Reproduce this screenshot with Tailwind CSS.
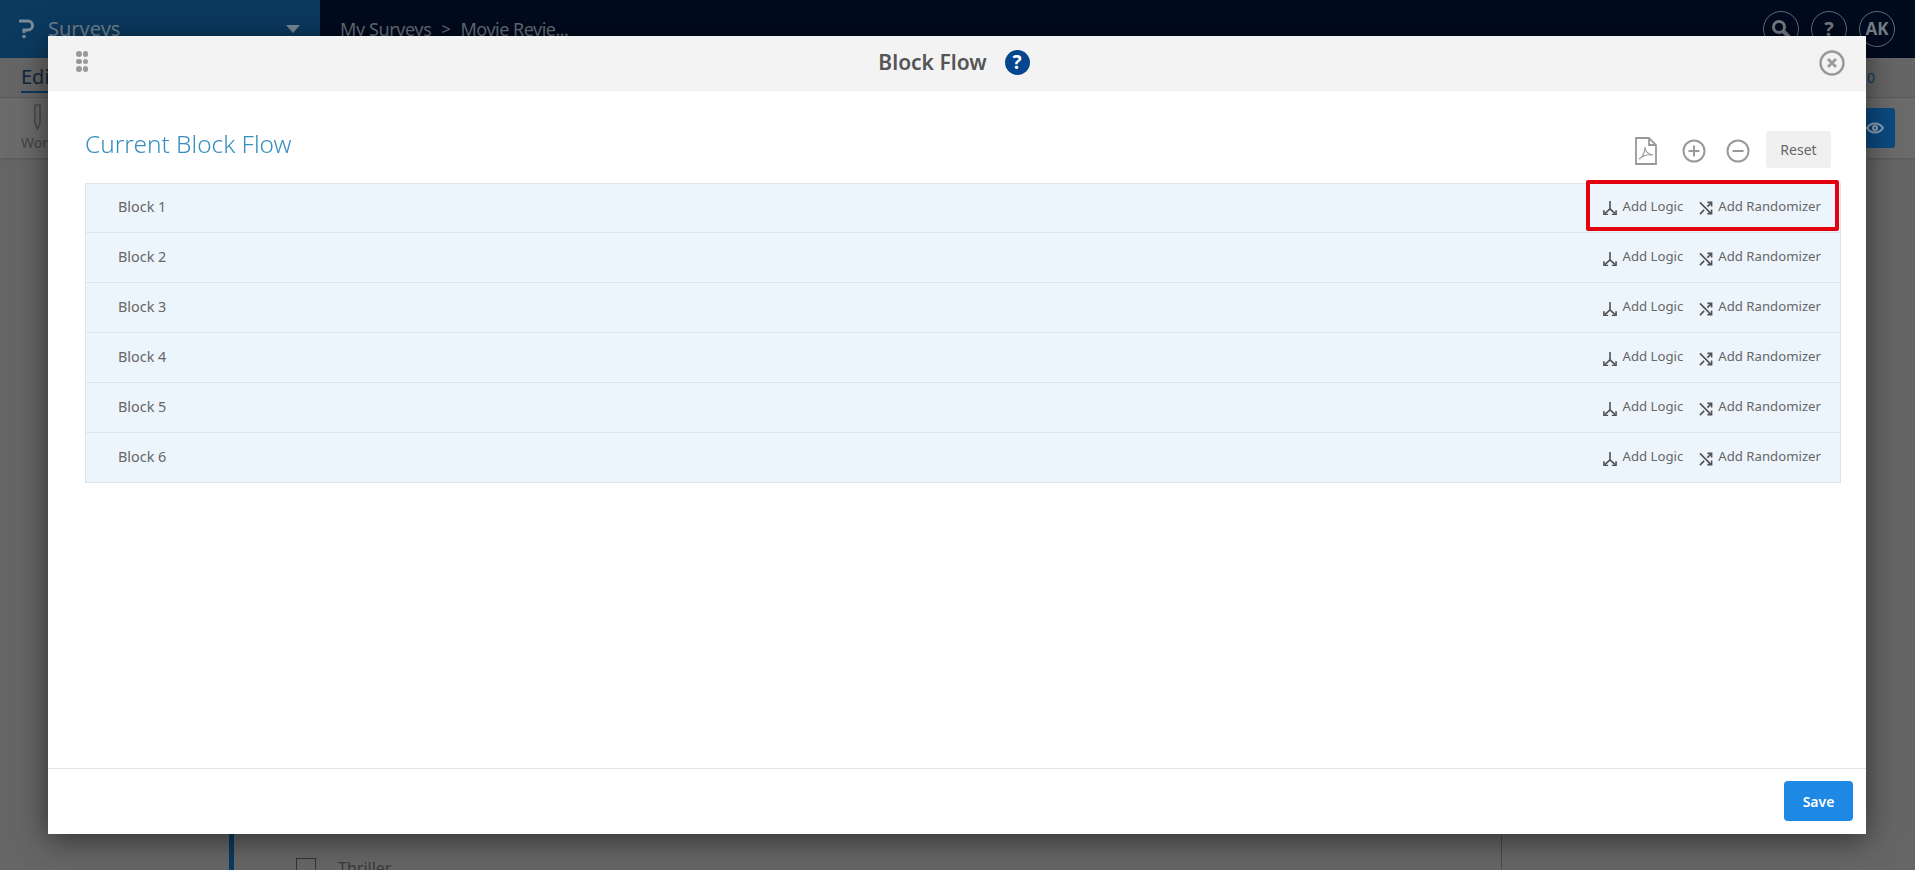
<!DOCTYPE html>
<html lang="en">
  <head>
    <meta charset="UTF-8" />
    <meta name="viewport" content="width=device-width, initial-scale=1.0" />
    <title>Block Flow</title>
    <script src="https://cdn.jsdelivr.net/npm/@tailwindcss/browser@4"></script>
  </head>
  <body class="bg-[#666666] h-screen overflow-hidden font-['Noto_Sans',sans-serif]">
    <!-- page behind the dialog -->
    <div class="flex flex-col h-[870px] overflow-hidden">
      <header class="flex h-[58px] bg-[#010b1e] shrink-0">
        <div class="w-[320px] bg-[#0b3a60] flex items-center pl-[18px] pb-[1px]">
          <svg class="w-[16px] h-[20px]" viewBox="0 0 16 20" fill="none" stroke="#7d8c98" stroke-width="3"><path d="M1 2h9a4 4 0 0 1 0 9H6v3" /><rect x="4.5" y="16" width="3" height="3" fill="#7d8c98" stroke="none" /></svg>
          <span class="ml-[14px] text-[20px] text-[#6f808e]">Surveys</span>
          <span class="ml-auto mr-[20px] w-0 h-0 border-x-[7px] border-x-transparent border-t-[8px] border-t-[#7b8b98]"></span>
        </div>
        <div class="flex-1 flex items-center pl-[20px] text-[18px] text-[#666f78]">
          <span class="tracking-[-0.4px]">My Surveys</span>
          <span class="mx-[10px] text-[16px]">&gt;</span>
          <span class="tracking-[-0.5px]">Movie Revie...</span>
          <div class="ml-auto mr-[20px] flex gap-[12px]">
            <span class="w-[36px] h-[36px] rounded-full border border-[#666f78] flex items-center justify-center">
              <svg class="w-[22px] h-[22px]" viewBox="0 0 22 22" fill="none" stroke="#777f86" stroke-width="3"><circle cx="9" cy="9" r="5.5" /><path d="M13 13l6 6" stroke-width="4" /></svg>
            </span>
            <span class="w-[36px] h-[36px] rounded-full border border-[#666f78] flex items-center justify-center text-[#777f86] font-bold text-[20px]">?</span>
            <span class="w-[36px] h-[36px] rounded-full border border-[#666f78] flex items-center justify-center text-[#777f86] font-bold text-[17px]">AK</span>
          </div>
        </div>
      </header>
      <div class="h-[40px] shrink-0 border-b border-[#5c5c5c] bg-[#666666] flex items-center pl-[21px] pr-[40px] justify-between">
        <span class="text-[20px] leading-[28px] text-[#10273d] border-b-2 border-[#0b3a60]">Edit</span>
        <span class="text-[14px] text-[#0b3a60]">0</span>
      </div>
      <div class="h-[60px] shrink-0 bg-[#6b6b6b] shadow-sm flex items-center justify-between pl-[21px] pr-[20px]">
        <div class="flex flex-col items-center">
          <svg class="w-[12px] h-[26px]" viewBox="0 0 12 26" fill="none" stroke="#3f3f3f" stroke-width="1.2"><path d="M3 1h5v18l-2.5 6L3 19z" /></svg>
          <span class="mt-[4px] text-[14px] leading-[18px] text-[#454545]">Work</span>
        </div>
        <span class="w-[40px] h-[40px] rounded-[3px] bg-[#0b4a80] flex items-center justify-center">
          <svg class="w-[18px] h-[14px]" viewBox="0 0 18 14" fill="none" stroke="#8fa5b8" stroke-width="2"><path d="M1 7c4-6 12-6 16 0-4 6-12 6-16 0z" /><circle cx="9" cy="7" r="2" /></svg>
        </span>
      </div>
      <div class="flex-1 ml-[229px] mr-[413px] border-l-[5px] border-l-[#0b3a60] border-r border-r-[#4a4a4a] pt-[700px] pl-[62px] flex items-start gap-[22px]">
        <span class="w-[20px] h-[20px] border border-[#333333] shrink-0"></span>
        <span class="text-[16px] text-[#3a3a3a] leading-[20px]">Thriller</span>
      </div>
    </div>

    <div class="fixed inset-0">
      <!-- dialog -->
      <div class="absolute left-[48px] top-[36px] w-[1818px] h-[798px] bg-white flex flex-col shadow-[0_5px_30px_rgba(0,0,0,0.55)]">
        <div class="h-[55px] shrink-0 bg-[#f3f3f3] relative flex items-center justify-center pb-[2px]">
          <div class="absolute left-[28px] top-[15px] grid grid-cols-2 gap-x-[1px] gap-y-[2px]">
            <span class="w-[5.5px] h-[5.5px] rounded-full bg-[#999999]"></span>
            <span class="w-[5.5px] h-[5.5px] rounded-full bg-[#999999]"></span>
            <span class="w-[5.5px] h-[5.5px] rounded-full bg-[#999999]"></span>
            <span class="w-[5.5px] h-[5.5px] rounded-full bg-[#999999]"></span>
            <span class="w-[5.5px] h-[5.5px] rounded-full bg-[#999999]"></span>
            <span class="w-[5.5px] h-[5.5px] rounded-full bg-[#999999]"></span>
          </div>
          <span class="text-[21px] font-semibold text-[#555555]">Block Flow</span>
          <span class="ml-[18px] mr-[6px] w-[25px] h-[25px] rounded-full bg-[#04478e] text-white font-bold text-[19px] flex items-center justify-center">?</span>
          <svg class="absolute left-[1771px] top-[14px] w-[26px] h-[26px]" viewBox="0 0 26 26" fill="none" stroke="#999999"><circle cx="13" cy="13" r="11.5" stroke-width="2.4" /><path d="M9 9l8 8M17 9l-8 8" stroke-width="2.8" /></svg>
        </div>

        <div class="flex-1 pl-[37px] pr-[25px]">
          <div class="h-[92px] flex items-start justify-between">
            <h2 class="mt-[37px] text-[24.4px] font-light text-[#3a8fc2] leading-[32px]">Current Block Flow</h2>
            <div class="mt-[40px] mr-[10px] flex items-center">
              <svg class="w-[24px] h-[28px] mt-[3px]" viewBox="0 0 24 28" fill="none" stroke="#999999" stroke-width="1.8"><path d="M2 1h13l7 7v19H2z" /><path d="M15 1v7h7" /><path d="M5 22c3-1 6-6 6-12 0 5 3 7 8 8-5-1-9 0-14 4z" stroke-width="1.1" /></svg>
              <svg class="w-[24px] h-[24px] ml-[24px] mt-[3px]" viewBox="0 0 24 24" fill="none" stroke="#999999" stroke-width="2"><circle cx="12" cy="12" r="10.5" /><path d="M12 6.5v11M6.5 12h11" /></svg>
              <svg class="w-[24px] h-[24px] ml-[20px] mt-[3px]" viewBox="0 0 24 24" fill="none" stroke="#999999" stroke-width="2"><circle cx="12" cy="12" r="10.5" /><path d="M6.5 12h11" /></svg>
              <button class="ml-[16px] w-[65px] h-[37px] bg-[#f0f0f0] rounded-[3px] text-[14px] text-[#666666]">Reset</button>
            </div>
          </div>

          <div class="border-x border-[#dde5ec] bg-[#edf5fc] relative">
            <div class="h-[50px] flex items-center justify-between pl-[32px] pr-[19px] pb-[3px] border-t border-b border-[#dde5ec]">
              <span class="text-[14.4px] text-[#666666]">Block 1</span>
              <div class="flex items-center text-[13.2px] text-[#666666]">
                <svg class="w-[14px] h-[14px] mt-[4px]" viewBox="0 0 15 15" fill="none" stroke="#505050" stroke-width="1.7"><path d="M7.5 0v8.5L2 13.5M7.5 8.5l5.5 5" /><path d="M1 10v4.5h4.5M14 10v4.5H9.5" /></svg>
                <span class="ml-[5px]">Add Logic</span>
                <svg class="ml-[16px] w-[14px] h-[14px] mt-[4px]" viewBox="0 0 15 15" fill="none" stroke="#505050" stroke-width="1.7"><path d="M1 1.5l12 12M1 14l4.5-4.5M9 6l4-4" /><path d="M9 1.5h4.5V6M13.5 9v4.5H9" /></svg>
                <span class="ml-[5px]">Add Randomizer</span>
              </div>
            </div>
            <div class="h-[50px] flex items-center justify-between pl-[32px] pr-[19px] pb-[1px] border-b border-[#dde5ec]">
              <span class="text-[14.4px] text-[#666666]">Block 2</span>
              <div class="flex items-center text-[13.2px] text-[#666666]">
                <svg class="w-[14px] h-[14px] mt-[4px]" viewBox="0 0 15 15" fill="none" stroke="#505050" stroke-width="1.7"><path d="M7.5 0v8.5L2 13.5M7.5 8.5l5.5 5" /><path d="M1 10v4.5h4.5M14 10v4.5H9.5" /></svg>
                <span class="ml-[5px]">Add Logic</span>
                <svg class="ml-[16px] w-[14px] h-[14px] mt-[4px]" viewBox="0 0 15 15" fill="none" stroke="#505050" stroke-width="1.7"><path d="M1 1.5l12 12M1 14l4.5-4.5M9 6l4-4" /><path d="M9 1.5h4.5V6M13.5 9v4.5H9" /></svg>
                <span class="ml-[5px]">Add Randomizer</span>
              </div>
            </div>
            <div class="h-[50px] flex items-center justify-between pl-[32px] pr-[19px] pb-[1px] border-b border-[#dde5ec]">
              <span class="text-[14.4px] text-[#666666]">Block 3</span>
              <div class="flex items-center text-[13.2px] text-[#666666]">
                <svg class="w-[14px] h-[14px] mt-[4px]" viewBox="0 0 15 15" fill="none" stroke="#505050" stroke-width="1.7"><path d="M7.5 0v8.5L2 13.5M7.5 8.5l5.5 5" /><path d="M1 10v4.5h4.5M14 10v4.5H9.5" /></svg>
                <span class="ml-[5px]">Add Logic</span>
                <svg class="ml-[16px] w-[14px] h-[14px] mt-[4px]" viewBox="0 0 15 15" fill="none" stroke="#505050" stroke-width="1.7"><path d="M1 1.5l12 12M1 14l4.5-4.5M9 6l4-4" /><path d="M9 1.5h4.5V6M13.5 9v4.5H9" /></svg>
                <span class="ml-[5px]">Add Randomizer</span>
              </div>
            </div>
            <div class="h-[50px] flex items-center justify-between pl-[32px] pr-[19px] pb-[1px] border-b border-[#dde5ec]">
              <span class="text-[14.4px] text-[#666666]">Block 4</span>
              <div class="flex items-center text-[13.2px] text-[#666666]">
                <svg class="w-[14px] h-[14px] mt-[4px]" viewBox="0 0 15 15" fill="none" stroke="#505050" stroke-width="1.7"><path d="M7.5 0v8.5L2 13.5M7.5 8.5l5.5 5" /><path d="M1 10v4.5h4.5M14 10v4.5H9.5" /></svg>
                <span class="ml-[5px]">Add Logic</span>
                <svg class="ml-[16px] w-[14px] h-[14px] mt-[4px]" viewBox="0 0 15 15" fill="none" stroke="#505050" stroke-width="1.7"><path d="M1 1.5l12 12M1 14l4.5-4.5M9 6l4-4" /><path d="M9 1.5h4.5V6M13.5 9v4.5H9" /></svg>
                <span class="ml-[5px]">Add Randomizer</span>
              </div>
            </div>
            <div class="h-[50px] flex items-center justify-between pl-[32px] pr-[19px] pb-[1px] border-b border-[#dde5ec]">
              <span class="text-[14.4px] text-[#666666]">Block 5</span>
              <div class="flex items-center text-[13.2px] text-[#666666]">
                <svg class="w-[14px] h-[14px] mt-[4px]" viewBox="0 0 15 15" fill="none" stroke="#505050" stroke-width="1.7"><path d="M7.5 0v8.5L2 13.5M7.5 8.5l5.5 5" /><path d="M1 10v4.5h4.5M14 10v4.5H9.5" /></svg>
                <span class="ml-[5px]">Add Logic</span>
                <svg class="ml-[16px] w-[14px] h-[14px] mt-[4px]" viewBox="0 0 15 15" fill="none" stroke="#505050" stroke-width="1.7"><path d="M1 1.5l12 12M1 14l4.5-4.5M9 6l4-4" /><path d="M9 1.5h4.5V6M13.5 9v4.5H9" /></svg>
                <span class="ml-[5px]">Add Randomizer</span>
              </div>
            </div>
            <div class="h-[50px] flex items-center justify-between pl-[32px] pr-[19px] pb-[1px] border-b border-[#dde5ec]">
              <span class="text-[14.4px] text-[#666666]">Block 6</span>
              <div class="flex items-center text-[13.2px] text-[#666666]">
                <svg class="w-[14px] h-[14px] mt-[4px]" viewBox="0 0 15 15" fill="none" stroke="#505050" stroke-width="1.7"><path d="M7.5 0v8.5L2 13.5M7.5 8.5l5.5 5" /><path d="M1 10v4.5h4.5M14 10v4.5H9.5" /></svg>
                <span class="ml-[5px]">Add Logic</span>
                <svg class="ml-[16px] w-[14px] h-[14px] mt-[4px]" viewBox="0 0 15 15" fill="none" stroke="#505050" stroke-width="1.7"><path d="M1 1.5l12 12M1 14l4.5-4.5M9 6l4-4" /><path d="M9 1.5h4.5V6M13.5 9v4.5H9" /></svg>
                <span class="ml-[5px]">Add Randomizer</span>
              </div>
            </div>
            <!-- red highlight from the screenshot -->
            <div class="absolute left-[1500px] top-[-3px] w-[253px] h-[51px] border-[4px] border-[#e3000f] rounded-[2px]"></div>
          </div>
        </div>

        <div class="h-[66px] shrink-0 border-t border-[#e2e2e2] flex items-center justify-end pr-[13px] pb-[1px]">
          <button class="w-[69px] h-[40px] bg-[#1e88e5] rounded-[4px] text-white text-[14px] font-semibold">Save</button>
        </div>
      </div>
    </div>
  </body>
</html>
